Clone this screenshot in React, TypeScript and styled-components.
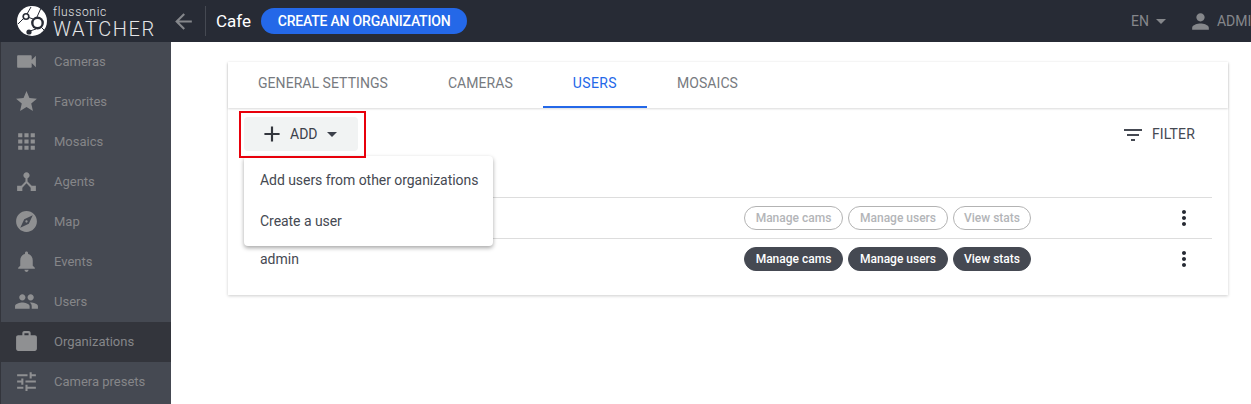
import React from 'react';
import styled, { createGlobalStyle } from 'styled-components';
import {
  MdVideocam, MdStar, MdApps, MdDeviceHub, MdExplore, MdNotifications, MdPeople,
  MdWork, MdTune, MdArrowBack, MdAdd, MdArrowDropDown, MdPerson, MdFilterList, MdMoreVert,
} from 'react-icons/md';

const Global = createGlobalStyle`
  html, body { margin: 0; padding: 0; background: #fff; }
  body { font-family: Roboto, "Liberation Sans", sans-serif; width: 1251px; height: 404px; overflow: hidden; }
  * { box-sizing: border-box; }
`;

const Page = styled.div`display: flex; flex-direction: column; width: 1251px; height: 404px; overflow: hidden;`;
const Header = styled.header`display: flex; align-items: center; height: 42px; flex: none; background: #272b35; white-space: nowrap;`;
const Brand = styled.div`display: flex; align-items: center; width: 171px; flex: none; padding-left: 17px; gap: 6px;`;
const BrandText = styled.div`display: flex; flex-direction: column; color: #e4e5e7; font-weight: 300; padding-top: 4px;`;
const BrandTop = styled.span`font-size: 12px; line-height: 11px; letter-spacing: 0.7px; margin-top: 1px;`;
const BrandBottom = styled.span`font-size: 20px; line-height: 22px; letter-spacing: 1.6px;`;
const BackIcon = styled(MdArrowBack)`font-size: 25px; color: #85878b; flex: none;`;
const Divider = styled.div`width: 1px; height: 30px; background: #454952; margin: 0 10px 0 9px;`;
const OrgName = styled.span`color: #fff; font-size: 17px; margin-right: 10px;`;
const CreateButton = styled.button`
  height: 26px; width: 206px; border: 0; border-radius: 13px; background: #2468e8; color: #fff; padding: 0;
  font: 500 14px Roboto, sans-serif; text-transform: uppercase; letter-spacing: -0.2px;
`;
const HeaderRight = styled.div`margin-left: auto; display: flex; align-items: center; color: #85878b; font-size: 14px; width: 120px; flex: none; overflow: hidden;`;
const LangCaret = styled(MdArrowDropDown)`font-size: 24px; flex: none;`;
const UserIcon = styled(MdPerson)`font-size: 25px; margin-left: 15px; margin-right: 4px; flex: none;`;

const Body = styled.div`display: flex; flex: 1; min-height: 0;`;
const Sidebar = styled.nav`width: 171px; flex: none; background: #454952; border-left: 1px solid #33353c; display: flex; flex-direction: column; overflow: hidden;`;
const NavItem = styled.div<{ $active?: boolean }>`
  height: 40px; flex: none; display: flex; align-items: center; padding: 0 0 1px 13px;
  color: #858689; font-size: 13px; background: ${(p) => (p.$active ? '#33353c' : 'transparent')};
`;
const NavIcon = styled.span`width: 25px; display: flex; justify-content: center; font-size: 25px; margin-right: 15px; color: #8f9092;`;

const Main = styled.main`flex: 1; padding: 20px 23px 0 57px; min-width: 0;`;
const Card = styled.section`position: relative; background: #fff; box-shadow: 0 1px 3px rgba(0,0,0,.2); padding-bottom: 16px;`;
const Tabs = styled.div`display: flex; height: 46px; box-shadow: 0 1px 2px rgba(0,0,0,.15);`;
const Tab = styled.div<{ $active?: boolean }>`
  display: flex; align-items: center; padding: 0 30px 3px; font-size: 14px; text-transform: uppercase;
  letter-spacing: ${(p) => (p.$active ? 0.4 : 0.05)}px;
  color: ${(p) => (p.$active ? '#2468e8' : '#777a80')};
  border-bottom: 2px solid ${(p) => (p.$active ? '#2468e8' : 'transparent')};
`;
const Toolbar = styled.div`display: flex; justify-content: space-between; align-items: flex-start; padding: 9px 33px 0 16px; height: 89px;`;
const AddButton = styled.button`
  display: flex; align-items: center; width: 114px; height: 34px; background: #f1f3f3; border: 0; border-radius: 4px;
  padding: 0 0 0 15px; color: #3c404a; font: 400 14px Roboto, sans-serif;
`;
const AddIcon = styled(MdAdd)`font-size: 26px; margin-right: 5px; color: #33363d; flex: none;`;
const CaretIcon = styled(MdArrowDropDown)`font-size: 24px; margin-left: 2px; flex: none;`;
const FilterButton = styled.div`display: flex; align-items: center; gap: 7px; height: 34px; color: #454952; font-size: 14px; letter-spacing: 0.15px;`;
const FilterIcon = styled(MdFilterList)`font-size: 24px; margin-top: 1px;`;
const Highlight = styled.div`position: absolute; z-index: 3; left: 11px; top: 49px; width: 127px; height: 47px; border: 2px solid #e8000b; pointer-events: none;`;
const Menu = styled.div`
  position: absolute; left: 16px; top: 94px; width: 249px; height: 90px; background: #fff; border-radius: 4px; z-index: 2;
  box-shadow: 0 2px 4px rgba(0,0,0,.35); padding: 3px 0; display: flex; flex-direction: column;
`;
const MenuItem = styled.div`height: 41px; display: flex; align-items: center; padding-left: 16px; font-size: 14px; color: #454952; letter-spacing: -0.05px;`;
const Table = styled.div`margin: 0 16px;`;
const Row = styled.div`display: flex; align-items: center; height: 41px; border-top: 1px solid #dddddd; padding-left: 16px; font-size: 14px; color: #454952;`;
const RowName = styled.span`flex: none; width: 484px;`;
const Chips = styled.div`display: flex; gap: 5px; width: 429px;`;
const Chip = styled.span<{ $on?: boolean; $w: number }>`
  height: 24px; width: ${(p) => p.$w}px; border-radius: 12px; display: flex; align-items: center; justify-content: center;
  font-size: 12px; font-weight: 500; white-space: nowrap;
  background: ${(p) => (p.$on ? '#454952' : '#fff')};
  color: ${(p) => (p.$on ? '#fff' : '#b3b5b8')};
  border: 1px solid ${(p) => (p.$on ? '#454952' : '#b3b3b3')};
`;
const MoreIcon = styled(MdMoreVert)`font-size: 24px; color: #262a33; margin-left: -1px;`;

const nav = [
  ['Cameras', MdVideocam], ['Favorites', MdStar], ['Mosaics', MdApps], ['Agents', MdDeviceHub], ['Map', MdExplore],
  ['Events', MdNotifications], ['Users', MdPeople], ['Organizations', MdWork], ['Camera presets', MdTune],
] as const;

const Logo = () => (
  <svg width="30" height="30" viewBox="0 0 30 30" style={{ flex: 'none' }}>
    <circle cx="15" cy="15" r="15" fill="#fff" />
    <g fill="#272b35">
      <circle cx="20.5" cy="17" r="6.4" />
      <circle cx="9" cy="10.5" r="3.6" />
      <circle cx="12" cy="26" r="2.6" />
    </g>
    <circle cx="20.5" cy="17" r="4" fill="#fff" />
    <circle cx="9" cy="10.5" r="2" fill="#fff" />
    <path d="M1 18 L7 12 M12 11.5 L16 13 M13 25 L19 23 M14 1 L10 8 M25 22 L28 25 M24 2 L20 11" stroke="#272b35" strokeWidth="1" fill="none" />
  </svg>
);

const perms = [['Manage cams', 99], ['Manage users', 100], ['View stats', 78]] as const;

const PermChips = ({ on }: { on?: boolean }) => (
  <Chips>
    {perms.map(([t, w]) => <Chip key={t} $on={on} $w={w}>{t}</Chip>)}
  </Chips>
);

export default function App() {
  return (
    <Page>
      <Global />
      <Header>
        <Brand>
          <Logo />
          <BrandText>
            <BrandTop>flussonic</BrandTop>
            <BrandBottom>WATCHER</BrandBottom>
          </BrandText>
        </Brand>
        <BackIcon />
        <Divider />
        <OrgName>Cafe</OrgName>
        <CreateButton>Create an organization</CreateButton>
        <HeaderRight>
          EN<LangCaret /><UserIcon />ADMIN
        </HeaderRight>
      </Header>
      <Body>
        <Sidebar>
          {nav.map(([label, Icon]) => (
            <NavItem key={label} $active={label === 'Organizations'}>
              <NavIcon><Icon /></NavIcon>{label}
            </NavItem>
          ))}
        </Sidebar>
        <Main>
          <Card>
            <Tabs>
              <Tab>General settings</Tab>
              <Tab>Cameras</Tab>
              <Tab $active>Users</Tab>
              <Tab>Mosaics</Tab>
            </Tabs>
            <Toolbar>
              <AddButton><AddIcon />ADD<CaretIcon /></AddButton>
              <FilterButton><FilterIcon />FILTER</FilterButton>
            </Toolbar>
            <Highlight />
            <Menu>
              <MenuItem>Add users from other organizations</MenuItem>
              <MenuItem>Create a user</MenuItem>
            </Menu>
            <Table>
              <Row><RowName /><PermChips /><MoreIcon /></Row>
              <Row><RowName>admin</RowName><PermChips on /><MoreIcon /></Row>
            </Table>
          </Card>
        </Main>
      </Body>
    </Page>
  );
}
